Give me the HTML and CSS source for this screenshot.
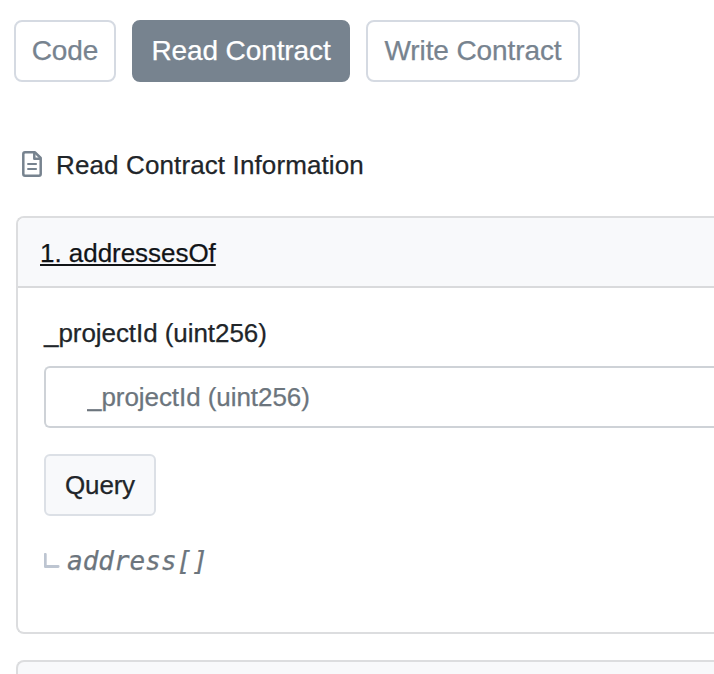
FILE: index.html
```html
<!DOCTYPE html>
<html lang="en">
<head>
<meta charset="utf-8">
<title>Read Contract</title>
<link rel="stylesheet" href="styles.css">
</head>
<body>
<nav class="tabs">
  <button class="tab tab-code"><span>Code</span></button>
  <button class="tab tab-read active"><span>Read Contract</span></button>
  <button class="tab tab-write"><span>Write Contract</span></button>
</nav>
<div class="heading">
  <svg class="doc-icon" viewBox="0 0 20 26" fill="none" stroke="#77838f" stroke-width="2.5" stroke-linejoin="round">
    <path d="M3 1.3H13L18.7 7V23Q18.7 24.7 17 24.7H3Q1.3 24.7 1.3 23V3Q1.3 1.3 3 1.3Z"/>
    <path d="M12.3 1.5V7.8H18.6"/>
    <path d="M5.3 13H14.8M5.3 18H14.8" stroke-width="2.2"/>
  </svg>
  <span class="heading-text">Read Contract Information</span>
</div>
<section class="card">
  <header class="card-header"><a class="method">1. addressesOf</a></header>
  <div class="card-body">
    <label class="label" for="project">_projectId (uint256)</label>
    <input class="input" id="project" placeholder="_projectId (uint256)">
    <button class="query"><span>Query</span></button>
    <div class="result">
      <svg class="corner" viewBox="0 0 16 16"><path d="M1.3 1.3V13.5H14.2" fill="none" stroke="#bdc5d1" stroke-width="2.8" stroke-linecap="round" stroke-linejoin="round"/></svg>
      <span class="type">address[]</span>
    </div>
  </div>
</section>
<section class="card card-next"></section>
</body>
</html>
```
FILE: styles.css
```css
* { box-sizing: border-box; }
body {
  margin: 0;
  height: 674px;
  background: #fff;
  color: #212529;
  font-family: "Liberation Sans", Arial, sans-serif;
  font-size: 26px;
  line-height: 32px;
  -webkit-text-stroke: 0.25px currentColor;
}
button { font: inherit; padding: 0; white-space: nowrap; }
.tabs { display: flex; gap: 16px; padding: 20px 0 0 14px; }
.tab {
  height: 62px;
  border: 2px solid #d5dae2;
  border-radius: 8px;
  background: #fff;
  color: #77838f;
  font-size: 28px;
  letter-spacing: -0.1px;
}
.tab-code { width: 102px; }
.tab-read { width: 218px; }
.tab-write { width: 214px; }
.tab.active { background: #77838f; border-color: #77838f; color: #fff; }
.heading { display: flex; align-items: center; height: 32px; margin: 67px 0 35px 22px; }
.heading-text { letter-spacing: 0.12px; }
.doc-icon { width: 20px; height: 26px; margin: -2px 14px 0 0; }
.card {
  height: 418px;
  margin: 0 0 26px 16px;
  border: 2px solid #dcdddf;
  border-right: 0;
  border-radius: 8px 0 0 8px;
  overflow: hidden;
}
.card-next { height: 14px; margin-bottom: 0; border-bottom: 0; border-radius: 8px 0 0 0; background: #f8f9fb; }
.card-header { height: 70px; padding: 19px 22px; background: #f8f9fb; border-bottom: 2px solid #d9dadc; }
.method { color: #111417; letter-spacing: -0.04px; text-decoration: underline; text-decoration-thickness: 2px; text-underline-offset: 2px; }
.card-body { display: flex; flex-direction: column; align-items: flex-start; padding: 29px 0 29px 26px; }
.label { height: 32px; margin-bottom: 17px; letter-spacing: -0.06px; }
.input {
  width: 100%;
  height: 62px;
  padding: 0 41px;
  border: 2px solid #ced2d7;
  border-right: 0;
  border-radius: 6px 0 0 6px;
  font: inherit;
  letter-spacing: -0.06px;
}
.input::placeholder { color: #6c757d; opacity: 1; }
.query { width: 112px; height: 62px; margin-top: 26px; border: 2px solid #dce0e6; border-radius: 6px; background: #f8f9fb; color: #212529; letter-spacing: -0.2px; }
.result { display: flex; align-items: center; height: 32px; margin-top: 29px; }
.corner { width: 16px; height: 16px; margin-right: 7px; }
.type { color: #6c757d; font-family: "DejaVu Sans Mono", monospace; font-style: italic; font-size: 26px; }
```
